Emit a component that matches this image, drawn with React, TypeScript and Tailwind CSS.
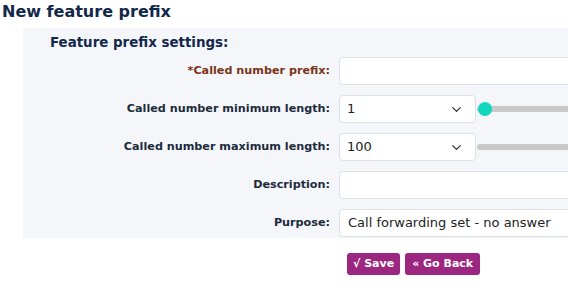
import React from "react";
import { ChevronDown } from "lucide-react";

const font = { fontFamily: '"DejaVu Sans", Verdana, sans-serif' };

function Label({ children, required }: { children: React.ReactNode; required?: boolean }) {
  return (
    <div
      className={`text-right text-[11.2px] font-bold ${required ? "text-[#7a3416]" : "text-[#1c2b3c]"}`}
    >
      {required ? "*" : ""}
      {children}
    </div>
  );
}

function Select({ value }: { value: string }) {
  return (
    <div className="flex h-[28px] w-[137px] items-center justify-between rounded-[4px] border border-[#dde0e6] bg-white pl-[7px] pr-[11px] text-[13px] text-[#222]">
      <span>{value}</span>
      <ChevronDown size={15} strokeWidth={2} className="text-[#333]" />
    </div>
  );
}

export default function App() {
  return (
    <div className="h-[303px] w-[568px] overflow-hidden bg-white" style={font}>
      <h1 className="pl-[2px] pt-[1px] text-[16px] font-bold leading-[22px] text-[#12284a]">
        New feature prefix
      </h1>
      <div className="ml-[23px] mt-[5px] h-[210px] w-[600px] bg-[#f5f6fa] pl-[27px] pt-[7px]">
        <div className="text-[13.4px] font-bold leading-[16px] text-[#12284a]">Feature prefix settings:</div>
        <div className="mt-[6px] grid grid-cols-[280px_1fr] items-center gap-x-[9px] gap-y-[10px]">
          <Label required>Called number prefix:</Label>
          <div className="h-[28px] w-[300px] rounded-[4px] border border-[#dde0e6] bg-white" />

          <Label>Called number minimum length:</Label>
          <div className="flex items-center">
            <Select value="1" />
            <div className="relative ml-[1px] flex h-[14px] w-[200px] items-center">
              <div className="h-[6px] w-full rounded-full bg-[#c8c8c8]" />
              <div className="absolute left-[1px] top-0 h-[14px] w-[14px] rounded-full bg-[#13d6bf]" />
            </div>
          </div>

          <Label>Called number maximum length:</Label>
          <div className="flex items-center">
            <Select value="100" />
            <div className="ml-[1px] h-[6px] w-[200px] rounded-full bg-[#c8c8c8]" />
          </div>

          <Label>Description:</Label>
          <div className="h-[28px] w-[300px] rounded-[4px] border border-[#dde0e6] bg-white" />

          <Label>Purpose:</Label>
          <div className="flex h-[28px] w-[300px] items-center rounded-[4px] border border-[#dde0e6] bg-white pl-[8px] text-[13px] text-[#222]">
            Call forwarding set - no answer
          </div>
        </div>
      </div>
      <div className="ml-[347px] mt-[15px] flex gap-[5px]">
        <button className="flex h-[22px] items-center rounded-[3px] bg-[#9c2780] px-[6px] text-[11px] font-bold text-white">
          √ Save
        </button>
        <button className="flex h-[22px] items-center rounded-[3px] bg-[#9c2780] px-[7px] text-[11px] font-bold text-white">
          « Go Back
        </button>
      </div>
    </div>
  );
}
